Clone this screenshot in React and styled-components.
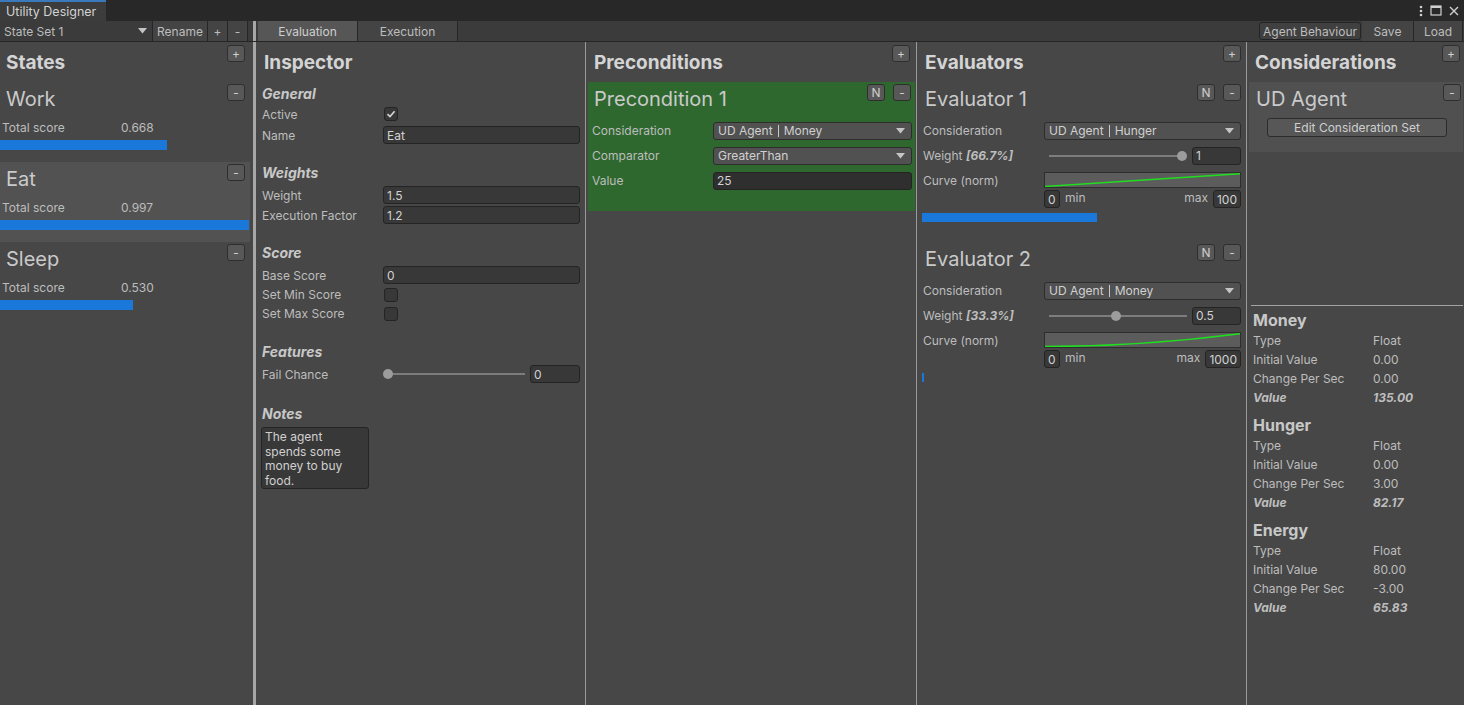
import React from 'react';
import styled, { createGlobalStyle } from 'styled-components';

const GlobalStyle = createGlobalStyle`
  html, body {
    margin: 0;
    padding: 0;
    background: #282828;
    overflow: hidden;
  }
  body {
    font-family: Inter, "Noto Sans", sans-serif;
    font-size: 12px;
    color: #c0c0c0;
  }
  * {
    box-sizing: border-box;
  }
`;

const COLORS = {
  panel: '#474747',
  selected: '#525252',
  toolbar: '#3b3b3b',
  field: '#383838',
  fieldBorder: '#242424',
  button: '#585858',
  buttonBorder: '#2e2e2e',
  label: '#bdbdbd',
  title: '#cacaca',
  heading: '#d4d4d4',
  blue: '#1b78db',
  green: '#2f682f',
};

const Window = styled.div`
  width: 1464px;
  height: 705px;
  display: flex;
  flex-direction: column;
  background: ${COLORS.panel};
`;

// Title bar with the docked tab
const TitleBar = styled.div`
  height: 21px;
  flex: none;
  background: #282828;
  display: flex;
  justify-content: space-between;
`;

const Tab = styled.div`
  width: 106px;
  height: 21px;
  background: #3c3c3c;
  border-top: 2px solid #3a79bb;
  padding-left: 6px;
  font-size: 12.5px;
  line-height: 19px;
  color: #d2d2d2;
`;

const WindowControls = styled.div`
  display: flex;
  align-items: center;
  gap: 7px;
  padding-right: 5px;
`;

// Toolbar
const Toolbar = styled.div`
  height: 21px;
  flex: none;
  display: flex;
  background: ${COLORS.toolbar};
  border-bottom: 1px solid #262626;
`;

const ToolbarLeft = styled.div`
  width: 253px;
  display: flex;
  flex: none;
`;

const ToolbarRight = styled.div`
  flex: 1;
  display: flex;
  padding-left: 2px;
  padding-right: 1px;
`;

const ToolDropdown = styled.div`
  width: 153px;
  display: flex;
  align-items: center;
  justify-content: space-between;
  padding: 0 5px 0 4px;
  border-right: 1px solid #262626;
  color: ${COLORS.label};
`;

const ToolButton = styled.div`
  width: ${p => p.$width}px;
  display: flex;
  align-items: center;
  justify-content: center;
  background: ${p => (p.$active ? '#565656' : '#444444')};
  border-right: 1px solid #262626;
  color: ${p => (p.$active ? '#cfcfcf' : COLORS.label)};
`;

const OutlinedToolButton = styled.div`
  width: 102px;
  margin: 1px 1px 1px 0;
  display: flex;
  align-items: center;
  justify-content: center;
  background: #404040;
  border: 1px solid #242424;
  border-radius: 3px;
  color: ${COLORS.label};
`;

const Spacer = styled.div`
  flex: 1;
`;

// Panels
const Main = styled.div`
  flex: 1;
  min-height: 0;
  display: flex;
`;

const Panel = styled.section`
  width: ${p => p.$width}px;
  flex: none;
  display: flex;
  flex-direction: column;
  background: ${COLORS.panel};
`;

const Splitter = styled.div`
  width: ${p => (p.$thick ? 3 : 1)}px;
  flex: none;
  background: ${p => (p.$thick ? '#a7a7a7' : '#9a9a9a')};
`;

const PanelHeader = styled.header`
  height: 40px;
  flex: none;
  display: flex;
  justify-content: space-between;
  align-items: flex-start;
  padding: 0 ${p => p.$right}px 0 ${p => p.$left}px;
`;

const PanelTitle = styled.h2`
  margin: 0;
  font-size: 19px;
  font-weight: 700;
  line-height: 41px;
  color: ${COLORS.heading};
`;

const SmallButton = styled.button`
  width: 18px;
  height: 17px;
  margin-top: ${p => p.$mt ?? 3}px;
  padding: 0;
  border: 1px solid ${COLORS.buttonBorder};
  border-radius: 3px;
  background: ${COLORS.button};
  color: #cfcfcf;
  font-family: Inter, sans-serif;
  font-size: 12px;
  line-height: 1;
  display: flex;
  align-items: center;
  justify-content: center;
`;

const ButtonGroup = styled.div`
  display: flex;
  gap: 8px;
`;

// States
const StateItem = styled.div`
  width: 250px;
  height: 80px;
  background: ${p => (p.$selected ? COLORS.selected : 'transparent')};
`;

const ItemTitleRow = styled.div`
  height: 34px;
  display: flex;
  justify-content: space-between;
  align-items: flex-start;
  padding: 0 ${p => p.$right}px 0 ${p => p.$left}px;
`;

const ItemTitle = styled.div`
  font-size: 20px;
  line-height: 34px;
  color: ${COLORS.title};
`;

const ScoreRow = styled.div`
  height: 20px;
  margin-top: 1px;
  padding-left: 2px;
  display: flex;
  align-items: center;
  color: ${COLORS.label};
`;

const ScoreLabel = styled.span`
  width: 119px;
`;

const ScoreBar = styled.div`
  height: ${p => p.$height || 10}px;
  margin-top: ${p => p.$mt ?? 3}px;
  margin-left: ${p => p.$ml || 0}px;
  background: ${COLORS.blue};
`;

// Form parts
const PanelBody = styled.div`
  padding: ${p => p.$top || 0}px ${p => p.$right}px 0 ${p => p.$left}px;
`;

const Section = styled.div`
  margin-bottom: ${p => p.$gap ?? 18}px;
`;

const SectionTitle = styled.div`
  height: 20px;
  line-height: 20px;
  font-size: 14px;
  font-weight: 700;
  font-style: italic;
  color: #c8c8c8;
`;

const FieldRow = styled.div`
  display: grid;
  grid-template-columns: 121px 1fr;
  align-items: center;
  height: ${p => p.$height || 20}px;
  margin-top: ${p => p.$mt || 0}px;
  padding: ${p => p.$padTop || 0}px ${p => p.$right || 0}px 0 ${p => p.$left || 0}px;
  color: ${COLORS.label};
`;

const FieldLabel = styled.span`
  white-space: nowrap;
  color: ${COLORS.label};
`;

const Em = styled.span`
  font-style: italic;
  font-weight: 700;
`;

const TextField = styled.div`
  height: 18px;
  width: ${p => (p.$width ? `${p.$width}px` : 'auto')};
  min-width: 16px;
  flex: none;
  padding: 0 3px;
  display: flex;
  align-items: center;
  background: ${p => (p.$dark ? '#2f2f2f' : COLORS.field)};
  border: 1px solid ${COLORS.fieldBorder};
  border-radius: 3px;
  color: #d2d2d2;
`;

const Checkbox = styled.div`
  width: 14px;
  height: 14px;
  margin-left: 1px;
  background: ${COLORS.field};
  border: 1px solid ${COLORS.fieldBorder};
  border-radius: 3px;
  display: flex;
  align-items: center;
  justify-content: center;
`;

const Dropdown = styled.div`
  height: 18px;
  padding: 0 6px 0 4px;
  display: flex;
  align-items: center;
  justify-content: space-between;
  background: #515151;
  border: 1px solid #2d2d2d;
  border-radius: 3px;
  color: #d0d0d0;
`;

const Pipe = styled.span`
  display: inline-block;
  width: 1px;
  height: 12px;
  margin: 0 5px;
  vertical-align: -2px;
  background: #c8c8c8;
`;

const SliderRow = styled.div`
  display: flex;
  align-items: center;
  gap: 5px;
`;

const SliderArea = styled.div`
  position: relative;
  flex: 1;
  height: 18px;
`;

const SliderTrack = styled.div`
  position: absolute;
  left: 5px;
  right: 0;
  top: 8px;
  height: 2px;
  background: #7d7d7d;
`;

const SliderThumb = styled.div`
  position: absolute;
  top: 4px;
  width: 10px;
  height: 10px;
  border-radius: 50%;
  background: #9c9c9c;
`;

const NotesBox = styled.div`
  width: 108px;
  height: 62px;
  margin-left: -1px;
  margin-top: 3px;
  padding: 2px 3px;
  white-space: pre-line;
  line-height: 14.5px;
  background: ${COLORS.field};
  border: 1px solid ${COLORS.fieldBorder};
  border-radius: 3px;
  color: #d0d0d0;
`;

// Preconditions
const PreconditionCard = styled.div`
  height: 129px;
  margin: 0 1px 0 2px;
  background: ${COLORS.green};
`;

// Evaluators
const EvaluatorBlock = styled.div`
  height: 160px;
`;

const CurveBox = styled.div`
  height: 16px;
  background: #5c5c5c;
  border: 1px solid #2e2e2e;
  display: flex;
`;

const MinMaxRow = styled.div`
  display: flex;
  align-items: center;
  height: 18px;
  color: ${COLORS.label};
`;

const MinMaxText = styled.span`
  margin: 0 ${p => (p.$right ? 5 : 0)}px 4px ${p => (p.$right ? 0 : 5)}px;
`;

// Considerations
const ConsiderationList = styled.div`
  height: 223px;
  flex: none;
`;

const ConsiderationCard = styled.div`
  height: 70px;
  margin: 0 1px 0 2px;
  background: #505050;
`;

const WideButton = styled.div`
  width: 180px;
  height: 19px;
  margin: 2px auto 0 auto;
  transform: translateX(1px);
  display: flex;
  align-items: center;
  justify-content: center;
  background: #575757;
  border: 1px solid #2c2c2c;
  border-radius: 3px;
  color: #cfcfcf;
`;

const HLine = styled.div`
  height: 1px;
  margin: 0 1px 0 4px;
  background: #a3a3a3;
`;

const InfoList = styled.div`
  display: flex;
  flex-direction: column;
  gap: 7px;
  padding: 3px 6px 0 6px;
`;

const InfoTitle = styled.div`
  height: 22px;
  line-height: 22px;
  font-size: 16px;
  font-weight: 700;
  color: #c8c8c8;
`;

const InfoRow = styled.div`
  display: grid;
  grid-template-columns: 120px 1fr;
  height: 19px;
  align-items: center;
  color: ${COLORS.label};
  font-style: ${p => (p.$strong ? 'italic' : 'normal')};
  font-weight: ${p => (p.$strong ? 700 : 400)};
`;

const Arrow = () => (
  <svg width="9" height="6" viewBox="0 0 9 6">
    <polygon points="0,0 9,0 4.5,5.5" fill="#c4c4c4" />
  </svg>
);

const Check = () => (
  <svg width="10" height="10" viewBox="0 0 10 10">
    <polyline points="1.5,5.2 4,7.6 8.6,2.2" fill="none" stroke="#d6d6d6" strokeWidth="1.6" />
  </svg>
);

const Slider = ({ value }) => (
  <SliderArea>
    <SliderTrack />
    <SliderThumb style={{ left: `calc(${value} * (100% - 10px))` }} />
  </SliderArea>
);

const Curve = ({ kind }) => (
  <svg width="100%" height="100%" viewBox="0 0 196 14" preserveAspectRatio="none">
    {kind === 'linear' ? (
      <line x1="0" y1="13.5" x2="196" y2="0.8" stroke="#1fe01f" strokeWidth="1.4" />
    ) : (
      <path d="M0 13.5 C 70 13.5 140 8 196 0.8" fill="none" stroke="#1fe01f" strokeWidth="1.4" />
    )}
  </svg>
);

const states = [
  { name: 'Work', score: 0.668 },
  { name: 'Eat', score: 0.997, selected: true },
  { name: 'Sleep', score: 0.53 },
];

const evaluators = [
  { name: 'Evaluator 1', consideration: 'Hunger', pct: '66.7%', weight: '1', t: 1, max: '100', curve: 'linear', bar: 175 },
  { name: 'Evaluator 2', consideration: 'Money', pct: '33.3%', weight: '0.5', t: 0.5, max: '1000', curve: 'quad', bar: 2 },
];

const considerations = [
  { name: 'Money', type: 'Float', initial: '0.00', change: '0.00', value: '135.00' },
  { name: 'Hunger', type: 'Float', initial: '0.00', change: '3.00', value: '82.17' },
  { name: 'Energy', type: 'Float', initial: '80.00', change: '-3.00', value: '65.83' },
];

const StatesPanel = () => (
  <Panel $width={253}>
    <PanelHeader $left={6} $right={8}>
      <PanelTitle>States</PanelTitle>
      <SmallButton>+</SmallButton>
    </PanelHeader>
    {states.map(s => (
      <StateItem key={s.name} $selected={s.selected}>
        <ItemTitleRow $left={6} $right={5}>
          <ItemTitle>{s.name}</ItemTitle>
          <SmallButton $mt={2}>-</SmallButton>
        </ItemTitleRow>
        <ScoreRow>
          <ScoreLabel>Total score</ScoreLabel>
          <span>{s.score.toFixed(3)}</span>
        </ScoreRow>
        <ScoreBar style={{ width: `${Math.round(s.score * 250)}px` }} />
      </StateItem>
    ))}
  </Panel>
);

const InspectorPanel = () => (
  <Panel $width={329}>
    <PanelHeader $left={8} $right={5}>
      <PanelTitle>Inspector</PanelTitle>
    </PanelHeader>
    <PanelBody $top={2} $left={6} $right={5}>
      <Section $gap={18}>
        <SectionTitle>General</SectionTitle>
        <FieldRow>
          <FieldLabel>Active</FieldLabel>
          <Checkbox><Check /></Checkbox>
        </FieldRow>
        <FieldRow $mt={1}>
          <FieldLabel>Name</FieldLabel>
          <TextField>Eat</TextField>
        </FieldRow>
      </Section>
      <Section $gap={18}>
        <SectionTitle>Weights</SectionTitle>
        <FieldRow $mt={2}>
          <FieldLabel>Weight</FieldLabel>
          <TextField>1.5</TextField>
        </FieldRow>
        <FieldRow>
          <FieldLabel>Execution Factor</FieldLabel>
          <TextField>1.2</TextField>
        </FieldRow>
      </Section>
      <Section $gap={19}>
        <SectionTitle>Score</SectionTitle>
        <FieldRow $mt={2}>
          <FieldLabel>Base Score</FieldLabel>
          <TextField>0</TextField>
        </FieldRow>
        <FieldRow $height={19}>
          <FieldLabel>Set Min Score</FieldLabel>
          <Checkbox />
        </FieldRow>
        <FieldRow $height={19}>
          <FieldLabel>Set Max Score</FieldLabel>
          <Checkbox />
        </FieldRow>
      </Section>
      <Section $gap={20}>
        <SectionTitle>Features</SectionTitle>
        <FieldRow $mt={2}>
          <FieldLabel>Fail Chance</FieldLabel>
          <SliderRow>
            <Slider value={0} />
            <TextField $width={50}>0</TextField>
          </SliderRow>
        </FieldRow>
      </Section>
      <SectionTitle>Notes</SectionTitle>
      <NotesBox>{'The agent\nspends some\nmoney to buy\nfood.'}</NotesBox>
    </PanelBody>
  </Panel>
);

const PreconditionsPanel = () => (
  <Panel $width={330}>
    <PanelHeader $left={8} $right={6}>
      <PanelTitle>Preconditions</PanelTitle>
      <SmallButton>+</SmallButton>
    </PanelHeader>
    <PreconditionCard>
      <ItemTitleRow $left={6} $right={4}>
        <ItemTitle>Precondition 1</ItemTitle>
        <ButtonGroup>
          <SmallButton $mt={2}>N</SmallButton>
          <SmallButton $mt={2}>-</SmallButton>
        </ButtonGroup>
      </ItemTitleRow>
      <FieldRow $height={25} $mt={2} $left={4} $right={3}>
        <FieldLabel>Consideration</FieldLabel>
        <Dropdown>
          <span>UD Agent<Pipe />Money</span>
          <Arrow />
        </Dropdown>
      </FieldRow>
      <FieldRow $height={25} $left={4} $right={3}>
        <FieldLabel>Comparator</FieldLabel>
        <Dropdown>
          <span>GreaterThan</span>
          <Arrow />
        </Dropdown>
      </FieldRow>
      <FieldRow $height={25} $left={4} $right={3}>
        <FieldLabel>Value</FieldLabel>
        <TextField $dark>25</TextField>
      </FieldRow>
    </PreconditionCard>
  </Panel>
);

const EvaluatorsPanel = () => (
  <Panel $width={329}>
    <PanelHeader $left={8} $right={5}>
      <PanelTitle>Evaluators</PanelTitle>
      <SmallButton>+</SmallButton>
    </PanelHeader>
    {evaluators.map(e => (
      <EvaluatorBlock key={e.name}>
        <ItemTitleRow $left={8} $right={5}>
          <ItemTitle>{e.name}</ItemTitle>
          <ButtonGroup>
            <SmallButton $mt={2}>N</SmallButton>
            <SmallButton $mt={2}>-</SmallButton>
          </ButtonGroup>
        </ItemTitleRow>
        <FieldRow $height={25} $mt={2} $left={6} $right={5}>
          <FieldLabel>Consideration</FieldLabel>
          <Dropdown>
            <span>UD Agent<Pipe />{e.consideration}</span>
            <Arrow />
          </Dropdown>
        </FieldRow>
        <FieldRow $height={25} $left={6} $right={5}>
          <FieldLabel>Weight <Em>[{e.pct}]</Em></FieldLabel>
          <SliderRow>
            <Slider value={e.t} />
            <TextField $width={49}>{e.weight}</TextField>
          </SliderRow>
        </FieldRow>
        <FieldRow $height={22} $padTop={2} $left={6} $right={5}>
          <FieldLabel>Curve (norm)</FieldLabel>
          <CurveBox><Curve kind={e.curve} /></CurveBox>
        </FieldRow>
        <FieldRow $height={18} $left={6} $right={5}>
          <span />
          <MinMaxRow>
            <TextField>0</TextField>
            <MinMaxText>min</MinMaxText>
            <Spacer />
            <MinMaxText $right>max</MinMaxText>
            <TextField>{e.max}</TextField>
          </MinMaxRow>
        </FieldRow>
        <ScoreBar $height={9} $mt={5} $ml={5} style={{ width: `${e.bar}px` }} />
      </EvaluatorBlock>
    ))}
  </Panel>
);

const ConsiderationsPanel = () => (
  <Panel $width={217}>
    <PanelHeader $left={8} $right={4}>
      <PanelTitle>Considerations</PanelTitle>
      <SmallButton>+</SmallButton>
    </PanelHeader>
    <ConsiderationList>
      <ConsiderationCard>
        <ItemTitleRow $left={7} $right={2}>
          <ItemTitle>UD Agent</ItemTitle>
          <SmallButton $mt={2}>-</SmallButton>
        </ItemTitleRow>
        <WideButton>Edit Consideration Set</WideButton>
      </ConsiderationCard>
    </ConsiderationList>
    <HLine />
    <InfoList>
      {considerations.map(c => (
        <div key={c.name}>
          <InfoTitle>{c.name}</InfoTitle>
          <InfoRow><span>Type</span><span>{c.type}</span></InfoRow>
          <InfoRow><span>Initial Value</span><span>{c.initial}</span></InfoRow>
          <InfoRow><span>Change Per Sec</span><span>{c.change}</span></InfoRow>
          <InfoRow $strong><span>Value</span><span>{c.value}</span></InfoRow>
        </div>
      ))}
    </InfoList>
  </Panel>
);

const App = () => (
  <>
    <GlobalStyle />
    <Window>
      <TitleBar>
        <Tab>Utility Designer</Tab>
        <WindowControls>
          <svg width="4" height="12" viewBox="0 0 4 12">
            <circle cx="2" cy="2" r="1.3" fill="#d0d0d0" />
            <circle cx="2" cy="6" r="1.3" fill="#d0d0d0" />
            <circle cx="2" cy="10" r="1.3" fill="#d0d0d0" />
          </svg>
          <svg width="12" height="11" viewBox="0 0 12 11">
            <rect x="1" y="1" width="10" height="9" fill="none" stroke="#d0d0d0" strokeWidth="1.2" />
            <line x1="1" y1="2" x2="11" y2="2" stroke="#d0d0d0" strokeWidth="2" />
          </svg>
          <svg width="10" height="10" viewBox="0 0 10 10">
            <path d="M1 1 L9 9 M9 1 L1 9" stroke="#d0d0d0" strokeWidth="1.4" />
          </svg>
        </WindowControls>
      </TitleBar>
      <Toolbar>
        <ToolbarLeft>
          <ToolDropdown>
            <span>State Set 1</span>
            <Arrow />
          </ToolDropdown>
          <ToolButton $width={55}>Rename</ToolButton>
          <ToolButton $width={20}>+</ToolButton>
          <ToolButton $width={20}>-</ToolButton>
        </ToolbarLeft>
        <Splitter $thick />
        <ToolbarRight>
          <ToolButton $width={100} $active>Evaluation</ToolButton>
          <ToolButton $width={100}>Execution</ToolButton>
          <Spacer />
          <OutlinedToolButton>Agent Behaviour</OutlinedToolButton>
          <ToolButton $width={52}>Save</ToolButton>
          <ToolButton $width={49}>Load</ToolButton>
        </ToolbarRight>
      </Toolbar>
      <Main>
        <StatesPanel />
        <Splitter $thick />
        <InspectorPanel />
        <Splitter />
        <PreconditionsPanel />
        <Splitter />
        <EvaluatorsPanel />
        <Splitter />
        <ConsiderationsPanel />
      </Main>
    </Window>
  </>
);

export default App;
